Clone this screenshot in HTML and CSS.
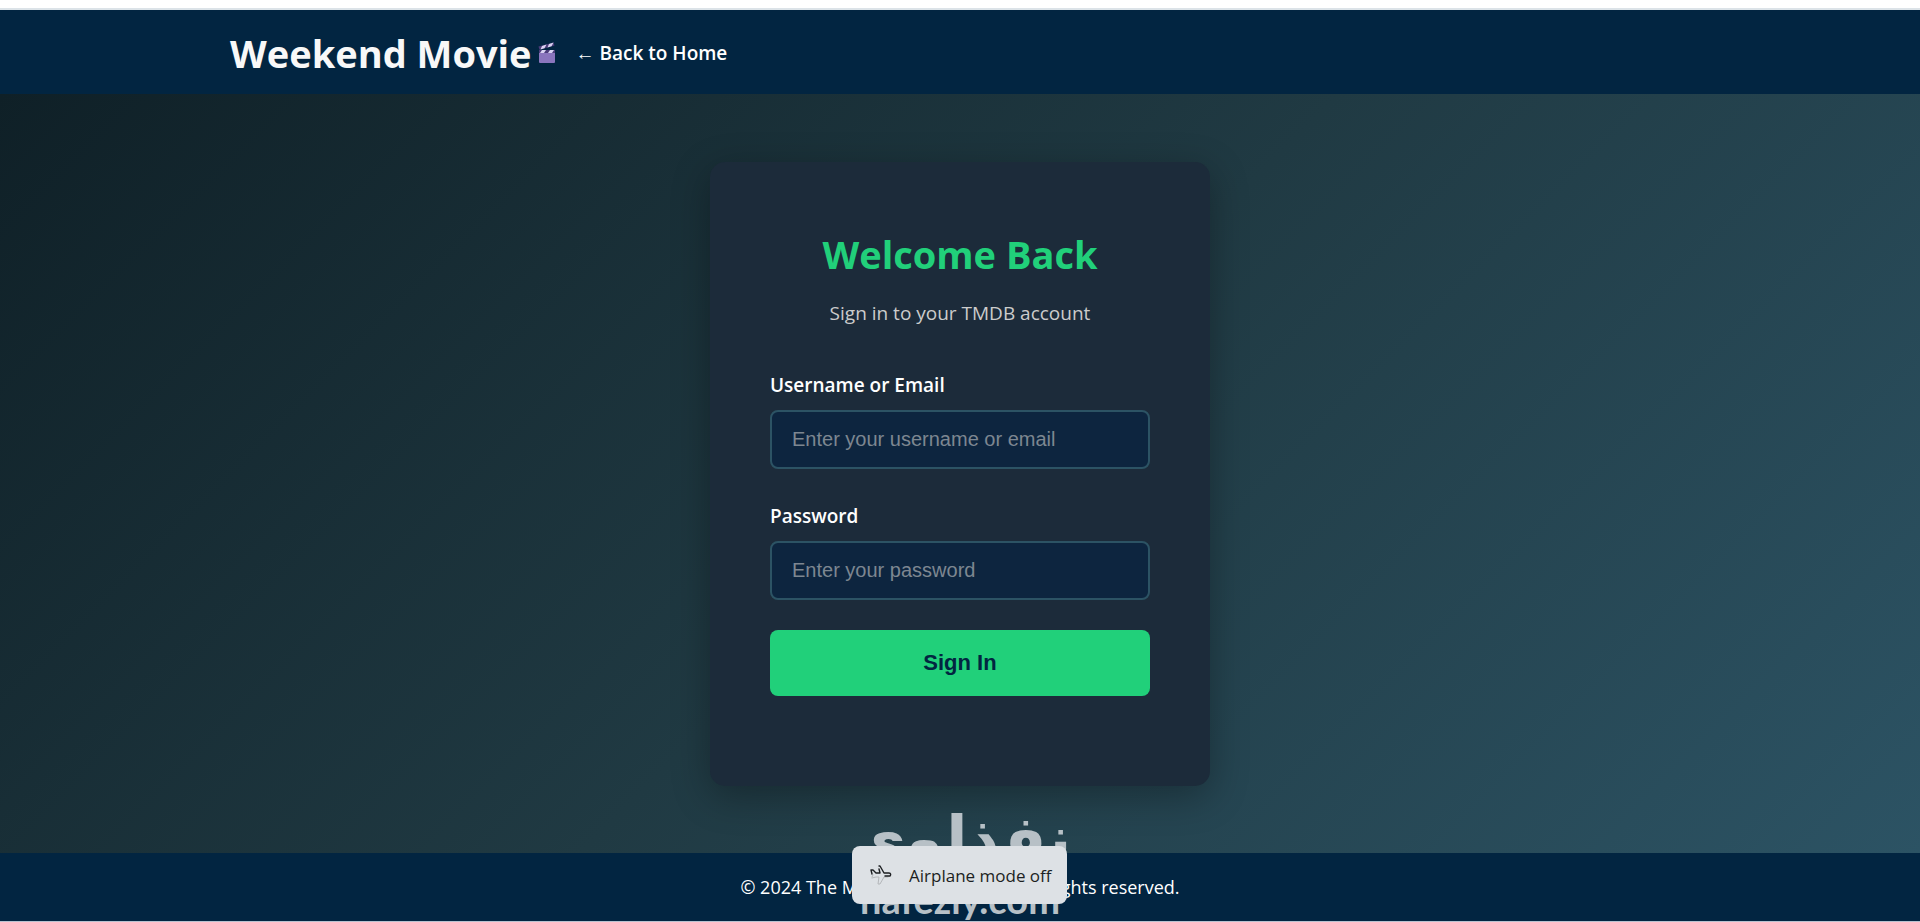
FILE: index.html
```html
<!DOCTYPE html>
<html lang="en">
<head>
    <meta charset="UTF-8">
    <title>Weekend Movie - Sign In</title>
    <meta name="viewport" content="width=device-width, initial-scale=1">
    <link rel="stylesheet" href="styles.css">
</head>
<body>
    <div class="top-strip"></div>

    <header class="header">
        <div class="container">
            <h1 class="logo">Weekend Movie</h1>
            <svg class="clapper" viewBox="0 0 18 22" aria-hidden="true">
                <path d="M0.5 4.5 L15.5 0.5 L16.5 3.5 L1.5 7.8 Z" fill="#4b3c7a"/>
                <path d="M4 4 L8.5 2.6 L6.5 6.2 L2.5 7.4 Z M11 2 L15.5 0.6 L13.5 4.2 L9.5 5.4 Z" fill="#d9d2f2"/>
                <rect x="1" y="8" width="16" height="13" rx="1" fill="#8a75bd"/>
                <rect x="1" y="8" width="16" height="3" fill="#4b3c7a"/>
                <path d="M4 8 H8 L6 11 H2 Z M12 8 H16 L14 11 H10 Z" fill="#d9d2f2"/>
            </svg>
            <a class="back-link" href="#"><span class="arrow">←</span> Back to Home</a>
        </div>
    </header>

    <main class="main">
        <div class="card">
            <h2>Welcome Back</h2>
            <p class="subtitle">Sign in to your TMDB account</p>
            <form autocomplete="off">
                <label for="username">Username or Email</label>
                <input id="username" type="text" name="username" placeholder="Enter your username or email">

                <label for="password">Password</label>
                <input id="password" type="password" name="password" placeholder="Enter your password">

                <button type="submit">Sign In</button>
            </form>
        </div>
    </main>

    <footer class="footer">
        <p>© 2024 The Movie Database App. All rights reserved.</p>
    </footer>
    <div class="bottom-line"></div>

    <!-- watermark and system toast over the page -->
    <div class="watermark">
        <span class="mark-ar" lang="ar" dir="rtl">نفذلوى</span>
        <span class="mark-en">nafezly.com</span>
    </div>
    <div class="toast" role="status">
        <svg class="plane" viewBox="0 0 22 22" aria-hidden="true" fill="none" stroke-linejoin="round" stroke-linecap="round">
            <path d="M2 13 L3 11 M2 14 L6 13 L9 13 L8 20 L10 20 L14 13 L18 13" stroke="#b4b7ba" stroke-width="1"/>
            <path d="M2 10 L1 6 L3 6 L6 9 L10 9 L9 5 M9 2 L10 2 L14 9 L19 9 C21 9 21 11 20 12 L15 12" stroke="#1c1f22" stroke-width="1.4"/>
        </svg>
        <span>Airplane mode off</span>
    </div>
</body>
</html>
```

FILE: styles.css
```css
* { box-sizing: border-box; margin: 0; padding: 0; }

body {
    font-family: "Open Sans", "Noto Sans", sans-serif;
    min-height: 100vh;
    display: flex;
    flex-direction: column;
    background: #022541;
    color: #fff;
}

.top-strip { height: 10px; background: #fff; border-bottom: 2px solid #dce3e8; }
.bottom-line { height: 1px; background: #b9c2d0; }

.header { background: #022541; height: 84px; padding-top: 2px; display: flex; align-items: center; }
.container { width: 100%; max-width: 1500px; margin: 0 auto; padding: 0 20px; display: flex; align-items: center; }
.logo { font-size: 38px; font-weight: 700; line-height: 56px; color: #f8f8f8; }
.clapper { width: 18px; height: 22px; margin: 0 20px 0 6px; }
.back-link { font-size: 19px; font-weight: 600; color: #fff; text-decoration: none; }
.arrow { font-family: "Liberation Sans", sans-serif; font-weight: 400; }

.main {
    flex: 1;
    display: flex;
    align-items: center;
    justify-content: center;
    padding: 40px 20px;
    background: linear-gradient(135deg, #0f2027 0%, #203a43 50%, #2c5364 100%);
}

.card {
    width: 100%;
    max-width: 500px;
    padding: 62px 60px 90px;
    border-radius: 15px;
    background: #1c2b3a;
    box-shadow: 0 10px 38px rgba(0, 0, 0, 0.3);
}
.card h2 { font-size: 38px; line-height: 60px; text-align: center; color: #21d07a; }
.subtitle { font-size: 19px; line-height: 28px; margin: 15px 0 44px; text-align: center; color: #ccc; }

label { display: block; font-size: 19px; line-height: 28px; font-weight: 600; margin-bottom: 11px; }
input {
    width: 100%;
    height: 59px;
    padding: 0 20px;
    margin-bottom: 33px;
    border: 2px solid #2c5364;
    border-radius: 8px;
    background: #0d253f;
    color: #fff;
    font: 20px "Liberation Sans", Arial, sans-serif;
}
input::placeholder { color: #7d8791; }
#password { margin-bottom: 30px; }
button {
    width: 100%;
    height: 66px;
    border: none;
    border-radius: 8px;
    background: #21d07a;
    color: #022541;
    font: bold 22px "Liberation Sans", Arial, sans-serif;
    cursor: pointer;
}

.footer { height: 68px; display: flex; align-items: center; justify-content: center; font-size: 18px; }

.watermark {
    position: absolute;
    left: 50%;
    bottom: 0;
    width: 240px;
    margin-left: -120px;
    display: flex;
    flex-direction: column;
    align-items: center;
    color: #b7c0c6;
    white-space: nowrap;
}
.mark-ar { font: bold 62px/74px "DejaVu Sans", sans-serif; }
.mark-en { font: bold 38px/46px Lato, sans-serif; }

.toast {
    position: absolute;
    left: 50%;
    bottom: 18px;
    width: 215px;
    height: 58px;
    margin-left: -108px;
    padding: 0 18px;
    display: flex;
    align-items: center;
    gap: 17px;
    border-radius: 8px;
    background: #dde1e5;
    color: #1c1f22;
    font-size: 17px;
    white-space: nowrap;
}
.plane { width: 22px; height: 22px; flex: none; }
```
